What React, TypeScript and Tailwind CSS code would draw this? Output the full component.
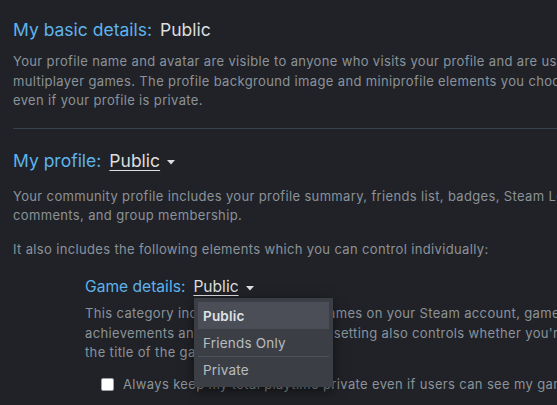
import React from "react";

const Caret = () => (
  <svg width="8" height="5" viewBox="0 0 8 5" className="ml-[7px] mt-[3px]">
    <path d="M0 0 L8 0 L4 4.5 Z" fill="#dcdedf" />
  </svg>
);

export default function App() {
  return (
    <div className="w-[557px] h-[405px] overflow-hidden bg-[#202227] font-['Inter',sans-serif] relative">
      <div className="pl-[13px] pt-[16px] w-[900px]">
        <div className="flex items-baseline text-[17.5px] leading-[28px]">
          <span className="text-[#5fb3ec]">My basic details:</span>
          <span className="ml-[8px] text-[#dcdedf]">Public</span>
        </div>
        <div className="mt-[8px] text-[13px] leading-[19.5px] tracking-[0.35px] text-[#8b929a] whitespace-nowrap">
          <div>Your profile name and avatar are visible to anyone who visits your profile and are used in</div>
          <div>multiplayer games. The profile background image and miniprofile elements you choose will be visible to everyone,</div>
          <div>even if your profile is private.</div>
        </div>
        <div className="mt-[17px] h-px bg-[#36424f] w-[800px]" />
        <div className="mt-[18px] flex items-center text-[17.5px] leading-[28px]">
          <span className="text-[#5fb3ec]">My profile:</span>
          <span className="ml-[8px] text-[#dcdedf] underline underline-offset-[3px] decoration-1">Public</span>
          <Caret />
        </div>
        <div className="mt-[12px] text-[13px] leading-[19.5px] tracking-[0.35px] text-[#8b929a] whitespace-nowrap">
          <div>Your community profile includes your profile summary, friends list, badges, Steam Level, showcases,</div>
          <div>comments, and group membership.</div>
        </div>
        <div className="mt-[14px] text-[13px] leading-[19.5px] tracking-[0.35px] text-[#8b929a] whitespace-nowrap">
          It also includes the following elements which you can control individually:
        </div>
        <div className="pl-[72px] mt-[16px]">
          <div className="relative flex items-center text-[15.6px] leading-[24px]">
            <span className="text-[#5fb3ec]">Game details:</span>
            <span className="ml-[8px] text-[#dcdedf] underline underline-offset-[3px] decoration-1">Public</span>
            <Caret />
            <div className="absolute left-[109px] top-[23px] w-[139px] bg-[#3b3e45] p-[4px] shadow-[0_4px_12px_rgba(0,0,0,0.5)] z-10 text-[13.5px] tracking-[0.2px]">
              <div className="h-[27px] bg-[#4b4e56] flex items-center pl-[5px] text-[#dfe3e6] font-semibold">Public</div>
              <div className="h-[27px] flex items-center pl-[5px] text-[#b8bcbf]">Friends Only</div>
              <div className="h-px bg-[#4e525a]" />
              <div className="h-[26px] flex items-center pl-[5px] text-[#b8bcbf]">Private</div>
            </div>
          </div>
          <div className="mt-[5px] text-[13px] leading-[19.5px] tracking-[0.35px] text-[#8b929a] whitespace-nowrap">
            <div>This category includes the list of all games on your Steam account, games you've wishlisted, your</div>
            <div>achievements and your playtime. This setting also controls whether you're seen as "in-game" and</div>
            <div>the title of the game you are playing.</div>
          </div>
          <div className="mt-[12px] pl-[16px] flex items-center text-[13px] tracking-[0.35px] text-[#8b929a] whitespace-nowrap">
            <span className="w-[13px] h-[13px] bg-white rounded-[2px] border border-[#9aa0a6]" />
            <span className="ml-[9px]">Always keep my total playtime private even if users can see my game details</span>
          </div>
        </div>
      </div>
    </div>
  );
}
